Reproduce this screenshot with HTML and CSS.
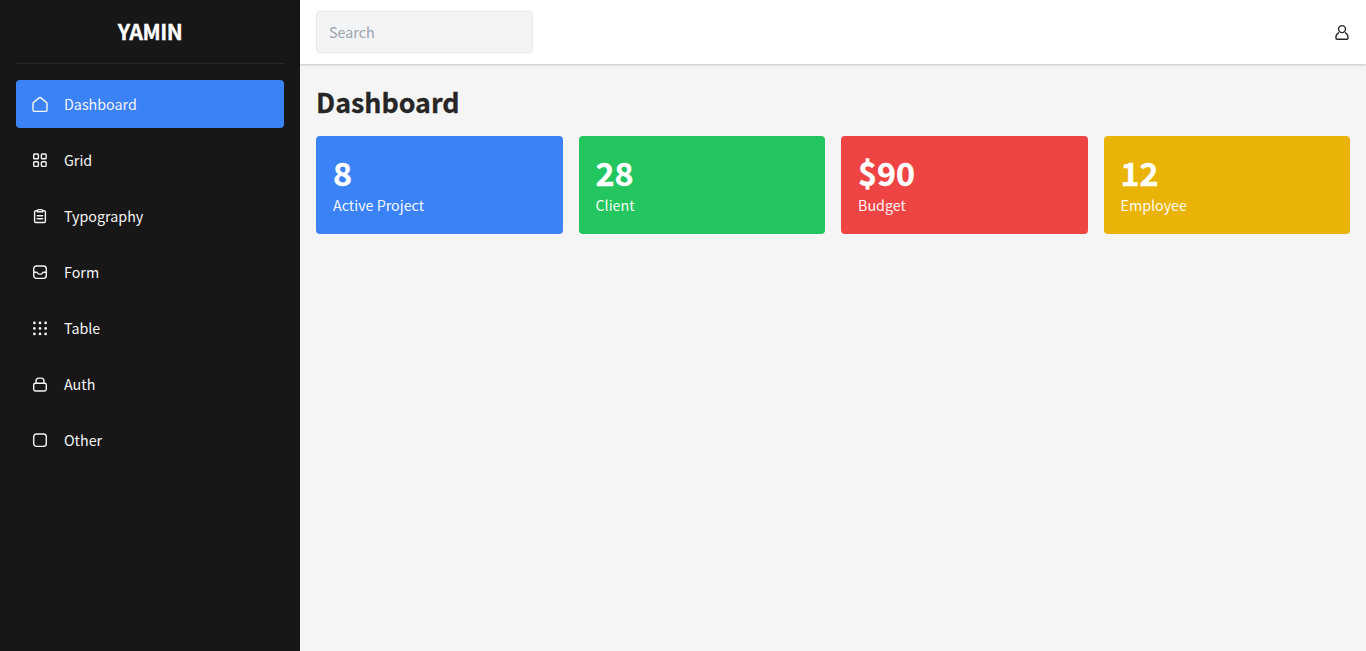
FILE: index.html
```html
<!DOCTYPE html>
<html lang="en">
<head>
<meta charset="utf-8">
<title>Dashboard</title>
<link rel="stylesheet" href="styles.css">
</head>
<body>
<div class="layout">
  <aside class="sidebar">
    <div class="brand">YAMIN</div>
    <nav class="menu">
      <a class="menu-item active"><svg class="icon" viewBox="0 0 16 16"><path d="M1 7.600c0-.5.2-.9.6-1.200L7.100 1.900c.5-.4 1.300-.4 1.800 0l5.500 4.500c.4.300.6.700.6 1.200v6.500c0 .7-.6 1.300-1.300 1.300H2.300c-.7 0-1.300-.6-1.300-1.300z"/></svg><span>Dashboard</span></a>
      <a class="menu-item"><svg class="icon" viewBox="0 0 16 16"><rect x="1.700" y="2" width="4.700" height="4.700" rx=".8"/><rect x="9.400" y="2" width="4.700" height="4.700" rx=".8"/><rect x="1.700" y="9.700" width="4.700" height="4.700" rx=".8"/><rect x="9.400" y="9.700" width="4.700" height="4.700" rx=".8"/></svg><span>Grid</span></a>
      <a class="menu-item"><svg class="icon" viewBox="0 0 16 16"><path d="M5.300 2.700H3.900c-.7 0-1.300.6-1.300 1.300v9.200c0 .7.600 1.300 1.300 1.300h8.200c.7 0 1.300-.6 1.300-1.300V4c0-.7-.6-1.300-1.300-1.300h-1.400M6.300 1.600h3.400c.6 0 1 .4 1 1v1.200H5.300V2.600c0-.6.4-1 1-1zM5.300 7.700h5.400M5.300 10.700h5.400"/></svg><span>Typography</span></a>
      <a class="menu-item"><svg class="icon" viewBox="0 0 16 16"><rect x="1.700" y="2" width="12.600" height="12.400" rx="2.800"/><path d="M1.700 8.200h2.600c.5 0 .8.200 1.100.6l.6.800c.3.400.6.500 1.100.5h1.800c.5 0 .8-.1 1.100-.5l.6-.8c.3-.4.6-.6 1.100-.6h2.600"/></svg><span>Form</span></a>
      <a class="menu-item"><svg class="icon dots" viewBox="0 0 16 16"><circle cx="2.400" cy="2.900" r="1.350"/><circle cx="8" cy="2.900" r="1.350"/><circle cx="13.600" cy="2.900" r="1.350"/><circle cx="2.400" cy="8.400" r="1.350"/><circle cx="8" cy="8.400" r="1.350"/><circle cx="13.600" cy="8.400" r="1.350"/><circle cx="2.400" cy="13.900" r="1.350"/><circle cx="8" cy="13.900" r="1.350"/><circle cx="13.600" cy="13.900" r="1.350"/></svg><span>Table</span></a>
      <a class="menu-item"><svg class="icon" viewBox="0 0 16 16"><rect x="1.700" y="7.200" width="12.600" height="7.800" rx="1.700"/><path d="M4 7V5.100c0-1.900 1.200-3 3-3h2c1.800 0 3 1.100 3 3V7"/></svg><span>Auth</span></a>
      <a class="menu-item"><svg class="icon" viewBox="0 0 16 16"><rect x="1.700" y="2" width="12.600" height="12.400" rx="2.800"/></svg><span>Other</span></a>
    </nav>
  </aside>
  <div class="main">
    <header class="topbar">
      <input class="search" type="text" placeholder="Search">
      <svg class="icon user" viewBox="0 0 16 16"><circle cx="8" cy="5.100" r="3.500"/><path d="M4.500 8.800c-1.500.8-2.500 2.300-2.500 4.200v1.300c0 .6.400 1 1 1h10c.6 0 1-.4 1-1V13c0-1.900-1-3.400-2.500-4.200"/></svg>
    </header>
    <main class="content">
      <h1 class="title">Dashboard</h1>
      <div class="cards">
        <div class="card blue"><div class="value">8</div><div class="label">Active Project</div></div>
        <div class="card green"><div class="value">28</div><div class="label">Client</div></div>
        <div class="card red"><div class="value">$90</div><div class="label">Budget</div></div>
        <div class="card yellow"><div class="value">12</div><div class="label">Employee</div></div>
      </div>
    </main>
  </div>
</div>
</body>
</html>
```
FILE: styles.css
```css
* { box-sizing: border-box; }
body {
  margin: 0;
  font-family: "Noto Sans CJK SC", sans-serif;
  font-size: 14.3px;
  line-height: 24px;
  color: #262626;
  background: #f5f5f5;
}
.layout { display: flex; height: 100vh; }
.sidebar { width: 300px; flex: none; padding: 0 16px; background: #171717; color: #f5f5f5; }
.brand {
  height: 64px;
  display: flex;
  align-items: center;
  justify-content: center;
  padding-bottom: 1px;
  border-bottom: 1px solid #262626;
  color: #fff;
  font-size: 21.4px;
  font-weight: 700;
  letter-spacing: -.025em;
  -webkit-text-stroke: .3px currentColor;
}
.menu { display: flex; flex-direction: column; gap: 8px; padding-top: 16px; }
.menu-item { display: flex; align-items: center; gap: 16px; height: 48px; padding: 0 16px; border-radius: 4px; }
.active { background: #3b82f6; }
.icon {
  width: 16px;
  height: 16px;
  flex: none;
  fill: none;
  stroke: currentColor;
  stroke-width: 1.4;
  stroke-linecap: round;
  stroke-linejoin: round;
}
.dots { fill: currentColor; stroke: none; }
.main { flex: 1; min-width: 0; }
.topbar {
  height: 64px;
  display: flex;
  align-items: center;
  justify-content: space-between;
  padding: 0 16px;
  background: #fff;
  box-shadow: 0 1px 3px rgba(0, 0, 0, .1), 0 1px 2px rgba(0, 0, 0, .1);
}
.search {
  width: 217px;
  height: 42px;
  padding: 7px 12px 9px;
  border: 1px solid #e5e7eb;
  border-radius: 4px;
  background: #f3f4f6;
  font: inherit;
}
.search::placeholder { color: #9ca3af; opacity: 1; }
.content { padding: 20px 16px; }
.title {
  margin: 0 0 16px;
  font-size: 26.8px;
  line-height: 36px;
  font-weight: 700;
  -webkit-text-stroke: .3px currentColor;
}
.cards { display: grid; grid-template-columns: repeat(4, 1fr); gap: 16px; }
.card { height: 98px; padding: 16px 17px; border-radius: 4px; color: #fff; }
.value { margin-bottom: 1px; font-size: 32.3px; line-height: 40px; font-weight: 700; -webkit-text-stroke: .3px currentColor; }
.label { opacity: .95; }
.blue { background: #3b82f6; }
.green { background: #22c55e; }
.red { background: #ef4444; }
.yellow { background: #eab308; }
```
